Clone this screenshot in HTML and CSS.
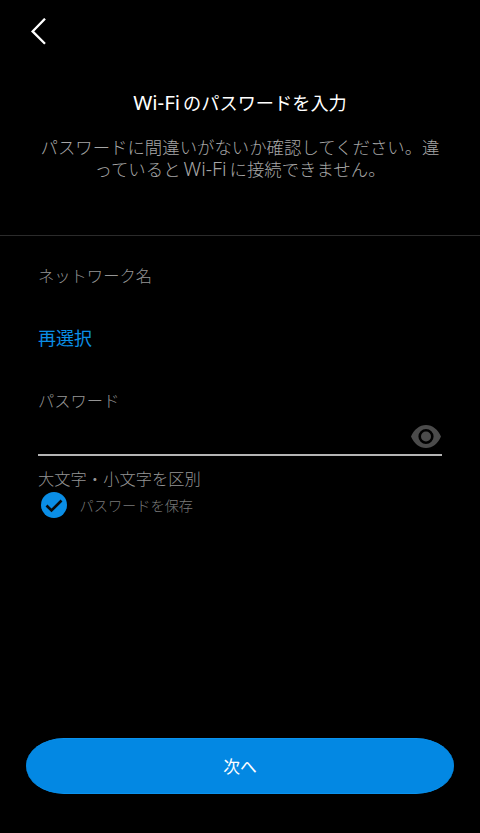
FILE: index.html
```html
<!DOCTYPE html>
<html lang="ja">
<head>
<meta charset="utf-8">
<title>Wi-Fiのパスワードを入力</title>
<link rel="stylesheet" href="styles.css">
</head>
<body>
<main class="screen">
  <header class="top">
    <svg class="back" width="18" height="28" viewBox="0 0 18 28" aria-hidden="true"><path d="M15 0.7 L2.6 13.4 L15 25.8" fill="none" stroke="#fff" stroke-width="2.3"/></svg>
    <h1 class="title"><span class="latin">Wi-Fi</span>のパスワードを入力</h1>
    <p class="desc">パスワードに間違いがないか確認してください。違っていると<span class="latin">Wi-Fi</span>に接続できません。</p>
  </header>
  <section class="form">
    <div class="label network">ネットワーク名</div>
    <a class="reselect">再選択</a>
    <div class="label password">パスワード</div>
    <div class="field">
      <svg class="eye" width="30" height="23" viewBox="0 0 30 23" aria-hidden="true"><path fill-rule="evenodd" fill="#4b4b4b" d="M15 0 C21.5 0 27 4.5 30 11.5 C27 18.5 21.5 23 15 23 C8.5 23 3 18.5 0 11.5 C3 4.5 8.5 0 15 0 Z M15 3.9 A7.6 7.6 0 1 0 15 19.1 A7.6 7.6 0 1 0 15 3.9 Z"/><circle cx="15" cy="11.5" r="5" fill="#4b4b4b"/></svg>
    </div>
    <div class="label case">大文字・小文字を区別</div>
    <div class="save">
      <svg class="check" width="26" height="26" viewBox="0 0 26 26" aria-hidden="true"><circle cx="13" cy="13" r="13" fill="#0a8ee6"/><path d="M5.5 13.5 L10.5 18.5 L20.5 8.5" fill="none" stroke="#0a0a0a" stroke-width="2.6"/></svg>
      <span class="save-text">パスワードを保存</span>
    </div>
  </section>
  <button class="next">次へ</button>
</main>
</body>
</html>
```
FILE: styles.css
```css
* { box-sizing: border-box; }
html, body { margin: 0; height: 100%; background: #000; }
body { font-family: "Noto Sans CJK JP", "Noto Sans", sans-serif; font-weight: 300; }
.screen { width: 480px; height: 833px; display: flex; flex-direction: column; overflow: hidden; }
.top { height: 236px; border-bottom: 1px solid #2b2b2b; padding-top: 18px; display: flex; flex-direction: column; }
.back { display: block; margin-left: 30px; }
.title { margin: 43px 0 0; font-size: 18.2px; line-height: 26px; font-weight: 400; color: #fff; text-align: center; }
.title .latin { font-size: 20.5px; margin-right: 3px; }
.latin { font-family: "Noto Sans", sans-serif; line-height: 1; }
.desc { margin: 21px 40px 0; font-size: 17.4px; line-height: 22px; color: #a6a6a6; text-align: center; }
.desc .latin { font-size: 19.6px; margin: 0 3px; }
.form { padding: 28px 38.5px 0 38px; display: flex; flex-direction: column; align-items: stretch; }
.label { font-size: 16.3px; line-height: 22px; color: #959595; }
.reselect { margin-top: 38px; font-size: 18px; line-height: 26px; font-weight: 400; color: #0a8ee6; }
.password { margin-top: 39px; }
.field { height: 45px; border-bottom: 2px solid #b4b4b4; display: flex; justify-content: flex-end; align-items: flex-start; padding: 14px 0.5px 0 0; }
.case { margin-top: 11px; }
.save { display: flex; align-items: center; gap: 12.5px; margin: 3px 0 0 3px; }
.save-text { font-size: 14.2px; line-height: 26px; color: #7a7a7a; }
.next { display: block; margin: auto 26px 39px; width: 428px; height: 56px; border: 0; border-top: 1px solid #0a92ee; border-bottom: 1px solid #0a92ee; border-radius: 38px / 28px; background: #0388e3; color: #fff; font: inherit; font-weight: 400; font-size: 16.8px; line-height: 52px; }
```
